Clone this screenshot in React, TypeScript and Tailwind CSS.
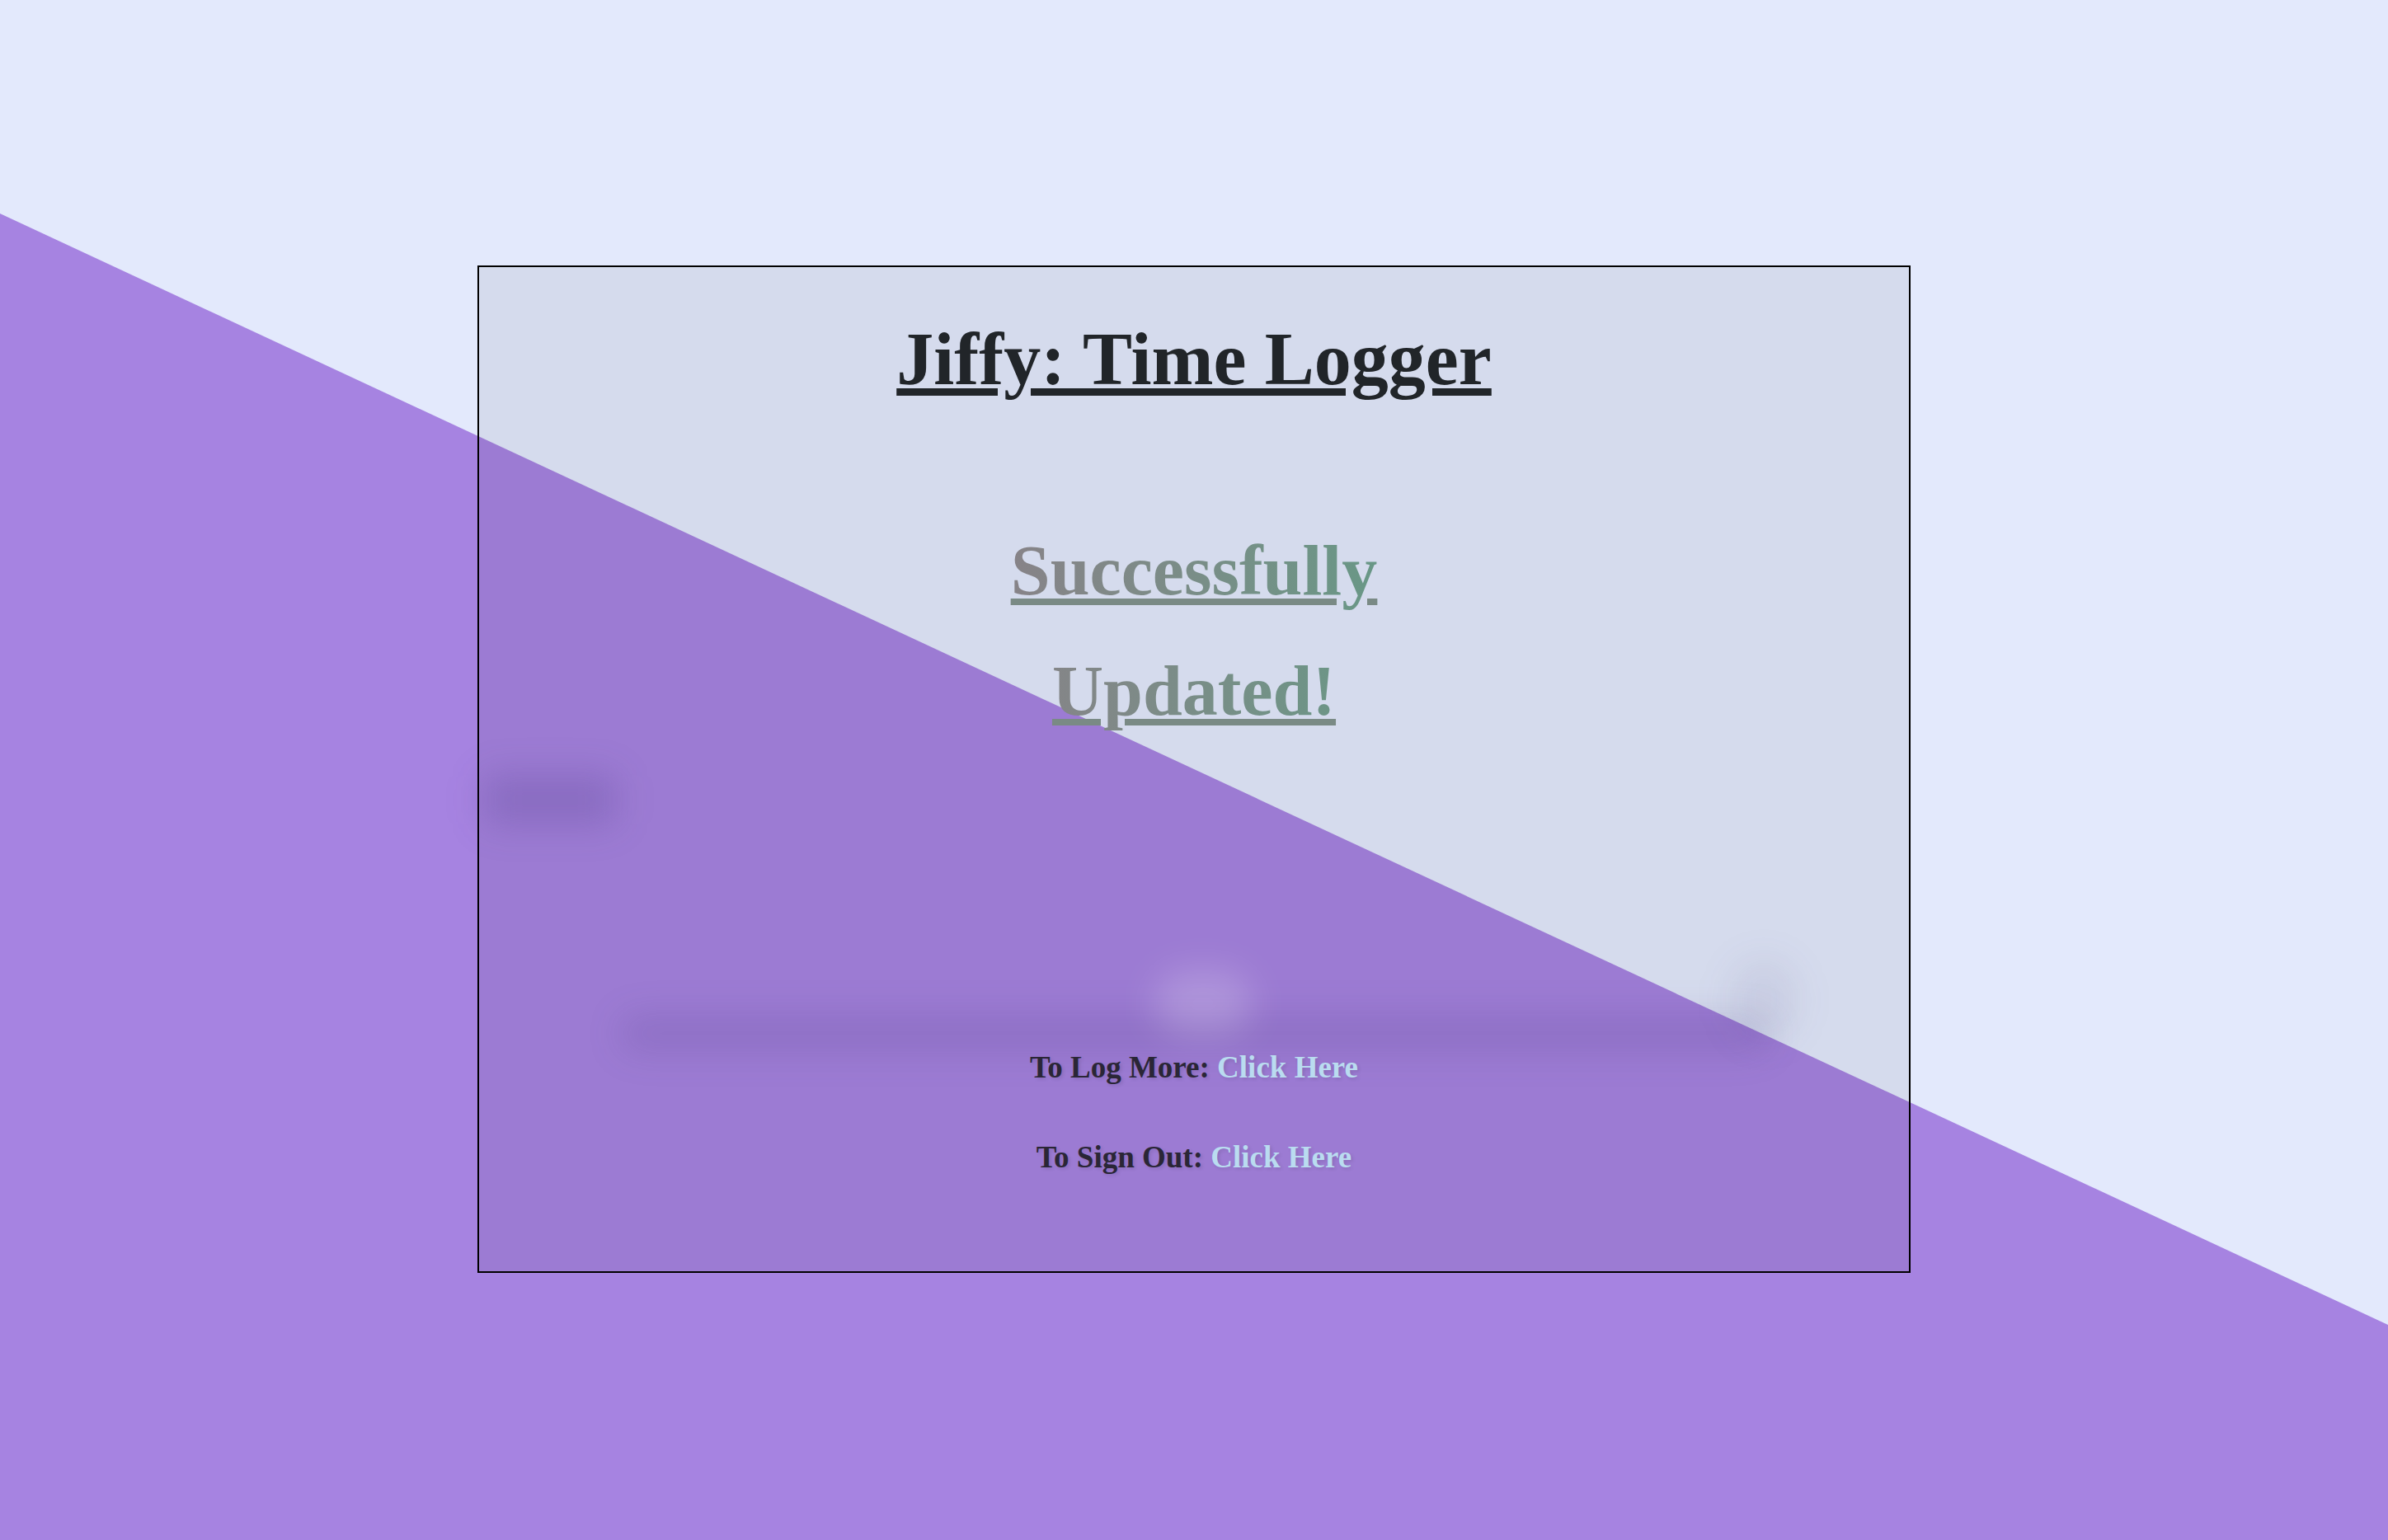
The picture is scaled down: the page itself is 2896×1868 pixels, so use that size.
export default function App() {
  return (
    <div className="relative h-screen w-full overflow-hidden bg-[#e3e9fc] font-['Liberation_Serif','Times_New_Roman',serif]">
      {/* diagonal purple backdrop */}
      <div className="absolute inset-0 bg-[#a683e1] [clip-path:polygon(0_13.87%,100%_86.03%,100%_100%,0_100%)]" />

      <div className="relative mx-auto mt-[322px] flex h-[1222px] w-[60%] flex-col items-center border-2 border-black bg-black/[0.06] pt-[58px] text-center">
        {/* faded, blurred form remnants */}
        <div className="pointer-events-none absolute left-[6px] top-[616px] h-[60px] w-[160px] rounded-xl bg-[#3e2f78]/20 blur-[22px]" />
        <div className="pointer-events-none absolute left-[170px] top-[906px] h-[47px] w-[1396px] rounded-full bg-[#3e2f78]/14 blur-[20px]" />
        <div className="pointer-events-none absolute left-[818px] top-[852px] h-[80px] w-[120px] rounded-full bg-white/20 blur-[22px]" />
        <div className="pointer-events-none absolute left-[1518px] top-[839px] h-[100px] w-[80px] rounded-full bg-[#3e2f78]/8 blur-[22px]" />

        <h1 className="relative text-[90px] leading-[108px] font-bold text-[#212529] underline">
          Jiffy: Time Logger
        </h1>

        <h2 className="relative mt-[129px] w-[480px] bg-linear-to-r from-[#888288] to-[#679886] bg-clip-text text-[86px] leading-[146px] font-bold text-transparent underline decoration-[#7a8a85]">
          Successfully Updated!
        </h2>

        <p className="relative mt-[356px] text-[37px] leading-[55.5px] font-bold text-[#2a2636] [text-shadow:2px_2px_4px_rgba(0,0,0,0.12)]">
          To Log More: <a href="#" className="text-[#badcf0]">Click Here</a>
        </p>
        <p className="relative mt-[53.5px] text-[37px] leading-[55.5px] font-bold text-[#2a2636] [text-shadow:2px_2px_4px_rgba(0,0,0,0.12)]">
          To Sign Out: <a href="#" className="text-[#badcf0]">Click Here</a>
        </p>
      </div>
    </div>
  );
}
